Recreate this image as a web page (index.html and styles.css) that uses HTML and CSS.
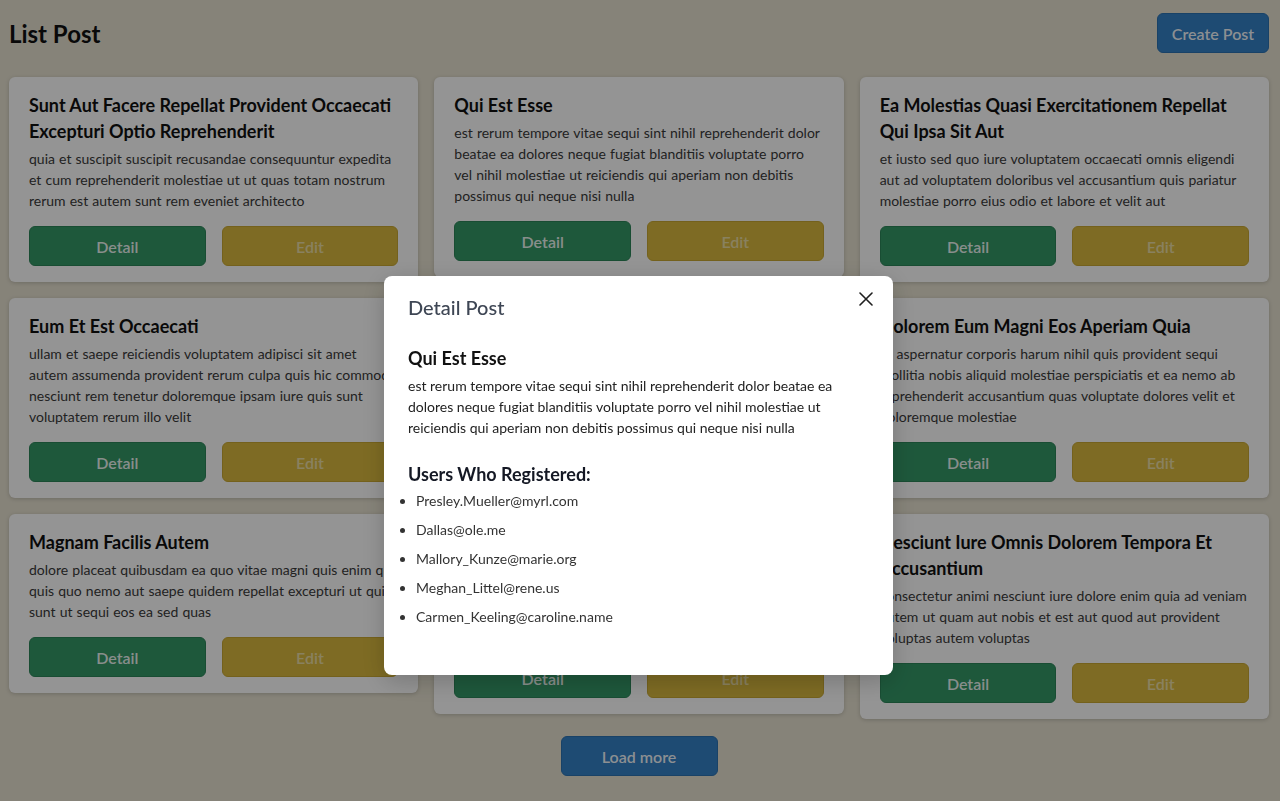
FILE: index.html
```html
<!DOCTYPE html>
<html lang="en">
<head>
<meta charset="utf-8">
<title>List Post</title>
<link rel="stylesheet" href="styles.css">
</head>
<body>
<div class="page">
  <header class="topbar">
    <h1 class="page-title">List Post</h1>
    <button class="btn btn-blue btn-create">Create Post</button>
  </header>

  <main class="grid">
    <article class="card">
      <h2 class="card-title">Sunt Aut Facere Repellat Provident Occaecati Excepturi Optio Reprehenderit</h2>
      <p class="card-body">quia et suscipit suscipit recusandae consequuntur expedita et cum reprehenderit molestiae ut ut quas totam nostrum rerum est autem sunt rem eveniet architecto</p>
      <div class="card-actions"><button class="btn btn-green">Detail</button><button class="btn btn-yellow">Edit</button></div>
    </article>
    <article class="card">
      <h2 class="card-title">Qui Est Esse</h2>
      <p class="card-body">est rerum tempore vitae sequi sint nihil reprehenderit dolor beatae ea dolores neque fugiat blanditiis voluptate porro vel nihil molestiae ut reiciendis qui aperiam non debitis possimus qui neque nisi nulla</p>
      <div class="card-actions"><button class="btn btn-green">Detail</button><button class="btn btn-yellow">Edit</button></div>
    </article>
    <article class="card">
      <h2 class="card-title">Ea Molestias Quasi Exercitationem Repellat Qui Ipsa Sit Aut</h2>
      <p class="card-body">et iusto sed quo iure voluptatem occaecati omnis eligendi aut ad voluptatem doloribus vel accusantium quis pariatur molestiae porro eius odio et labore et velit aut</p>
      <div class="card-actions"><button class="btn btn-green">Detail</button><button class="btn btn-yellow">Edit</button></div>
    </article>

    <article class="card">
      <h2 class="card-title">Eum Et Est Occaecati</h2>
      <p class="card-body">ullam et saepe reiciendis voluptatem adipisci sit amet autem assumenda provident rerum culpa quis hic commodi nesciunt rem tenetur doloremque ipsam iure quis sunt voluptatem rerum illo velit</p>
      <div class="card-actions"><button class="btn btn-green">Detail</button><button class="btn btn-yellow">Edit</button></div>
    </article>
    <article class="card">
      <h2 class="card-title">Nesciunt Quas Odio</h2>
      <p class="card-body">repudiandae veniam quaerat sunt sed alias aut fugiat sit autem sed est voluptatem omnis possimus esse voluptatibus quis est aut tenetur dolor neque</p>
      <div class="card-actions"><button class="btn btn-green">Detail</button><button class="btn btn-yellow">Edit</button></div>
    </article>
    <article class="card">
      <h2 class="card-title">Dolorem Eum Magni Eos Aperiam Quia</h2>
      <p class="card-body">ut aspernatur corporis harum nihil quis provident sequi mollitia nobis aliquid molestiae perspiciatis et ea nemo ab reprehenderit accusantium quas voluptate dolores velit et doloremque molestiae</p>
      <div class="card-actions"><button class="btn btn-green">Detail</button><button class="btn btn-yellow">Edit</button></div>
    </article>

    <article class="card">
      <h2 class="card-title">Magnam Facilis Autem</h2>
      <p class="card-body">dolore placeat quibusdam ea quo vitae magni quis enim qui quis quo nemo aut saepe quidem repellat excepturi ut quia sunt ut sequi eos ea sed quas</p>
      <div class="card-actions"><button class="btn btn-green">Detail</button><button class="btn btn-yellow">Edit</button></div>
    </article>
    <article class="card">
      <h2 class="card-title">Dolorem Dolore Est Ipsam</h2>
      <p class="card-body">dignissimos aperiam dolorem qui eum facilis quibusdam animi sint suscipit qui sint possimus cum quaerat magni maiores excepturi ipsam ut commodi dolor voluptatum modi aut vitae et laboriosam</p>
      <div class="card-actions"><button class="btn btn-green">Detail</button><button class="btn btn-yellow">Edit</button></div>
    </article>
    <article class="card">
      <h2 class="card-title">Nesciunt Iure Omnis Dolorem Tempora Et Accusantium</h2>
      <p class="card-body">consectetur animi nesciunt iure dolore enim quia ad veniam autem ut quam aut nobis et est aut quod aut provident voluptas autem voluptas</p>
      <div class="card-actions"><button class="btn btn-green">Detail</button><button class="btn btn-yellow">Edit</button></div>
    </article>
  </main>

  <div class="more-row"><button class="btn btn-blue btn-more">Load more</button></div>
</div>

<div class="overlay">
  <section class="modal">
    <div class="modal-head">
      <h2 class="modal-title">Detail Post</h2>
      <button class="modal-close" aria-label="Close">
        <svg width="14" height="14" viewBox="0 0 14 14"><path d="M1 1 L13 13 M13 1 L1 13" stroke="#1f1f1f" stroke-width="1.6" stroke-linecap="round" fill="none"/></svg>
      </button>
    </div>
    <h3 class="post-title">Qui Est Esse</h3>
    <p class="post-body">est rerum tempore vitae sequi sint nihil reprehenderit dolor beatae ea dolores neque fugiat blanditiis voluptate porro vel nihil molestiae ut reiciendis qui aperiam non debitis possimus qui neque nisi nulla</p>
    <h3 class="users-title">Users Who Registered:</h3>
    <ul class="users">
      <li>Presley.Mueller@myrl.com</li>
      <li>Dallas@ole.me</li>
      <li>Mallory_Kunze@marie.org</li>
      <li>Meghan_Littel@rene.us</li>
      <li>Carmen_Keeling@caroline.name</li>
    </ul>
  </section>
</div>
</body>
</html>
```
FILE: styles.css
```css
* { box-sizing: border-box; }

html, body { margin: 0; }

body {
  background: #e7e2d1;
  font-family: Lato, "Open Sans", "Liberation Sans", sans-serif;
  color: #222;
}

.page {
  padding: 13px 11px 26px 9px;
}

.topbar {
  display: flex;
  justify-content: space-between;
  align-items: center;
  height: 40px;
  margin-bottom: 24px;
}

.page-title {
  margin: 0;
  font-size: 24px;
  font-weight: 700;
  color: #111;
  line-height: 1;
  padding-top: 2px;
}

.btn {
  font-family: inherit;
  font-size: 16px;
  font-weight: 600;
  height: 40px;
  border-radius: 6px;
  cursor: pointer;
  color: #fff;
  white-space: nowrap;
  padding: 0;
}

.btn-blue {
  background: #3481c6;
  border: 1px solid #2c72b2;
  color: rgba(255, 255, 255, 0.95);
}

.btn-create {
  width: 112px;
}

.btn-green {
  background: #349867;
  border: 1px solid #2c8559;
  color: rgba(255, 255, 255, 0.92);
}

.btn-yellow {
  background: #d9b93e;
  border: 1px solid #c9a832;
  color: rgba(255, 255, 255, 0.55);
}

.grid {
  display: grid;
  grid-template-columns: repeat(3, 1fr);
  gap: 16px;
  align-items: start;
}

.card {
  background: #fff;
  border-radius: 6px;
  padding: 15px 20px 16px;
  box-shadow: 0 1px 4px rgba(0, 0, 0, 0.18);
}

.card-title {
  margin: 0 0 4px;
  font-size: 18px;
  line-height: 26px;
  font-weight: 700;
  color: #111;
}

.card-body {
  margin: 0;
  font-size: 14px;
  line-height: 21px;
  word-spacing: 0.5px;
  color: #3a3a3a;
}

.card-actions {
  display: grid;
  grid-template-columns: 1fr 1fr;
  gap: 16px;
  margin-top: 15px;
}

.more-row {
  display: flex;
  justify-content: center;
  margin-top: 17px;
}

.btn-more {
  width: 157px;
}

/* modal */
.overlay {
  position: fixed;
  inset: 0;
  background: rgba(0, 0, 0, 0.42);
  display: flex;
  justify-content: center;
  align-items: flex-start;
  padding-top: 276px;
  padding-right: 3px;
}

.modal {
  width: 509px;
  background: #fff;
  border-radius: 8px;
  padding: 16px 24px 24px;
  box-shadow: 0 6px 24px rgba(0, 0, 0, 0.2);
}

.modal-head {
  display: flex;
  justify-content: space-between;
  align-items: flex-start;
  margin-bottom: 23px;
}

.modal-title {
  margin: 0;
  font-size: 20px;
  line-height: 30px;
  font-weight: 500;
  color: #3e4654;
}

.modal-close {
  border: 0;
  background: none;
  padding: 0;
  margin: 0 -4px 0 0;
  width: 14px;
  height: 14px;
  display: flex;
  cursor: pointer;
}

.post-title {
  margin: 0 0 4px;
  font-size: 18px;
  line-height: 26px;
  font-weight: 700;
  color: #111;
}

.post-body {
  margin: 0;
  font-size: 14px;
  line-height: 21px;
  color: #222;
}

.users-title {
  margin: 23px 0 3px;
  font-size: 18px;
  line-height: 26px;
  font-weight: 700;
  color: #141824;
}

.users {
  margin: 0 0 24px;
  padding-left: 8px;
  list-style: disc;
}

.users li {
  font-size: 14px;
  line-height: 21px;
  margin-bottom: 8px;
  color: #333;
}
```
